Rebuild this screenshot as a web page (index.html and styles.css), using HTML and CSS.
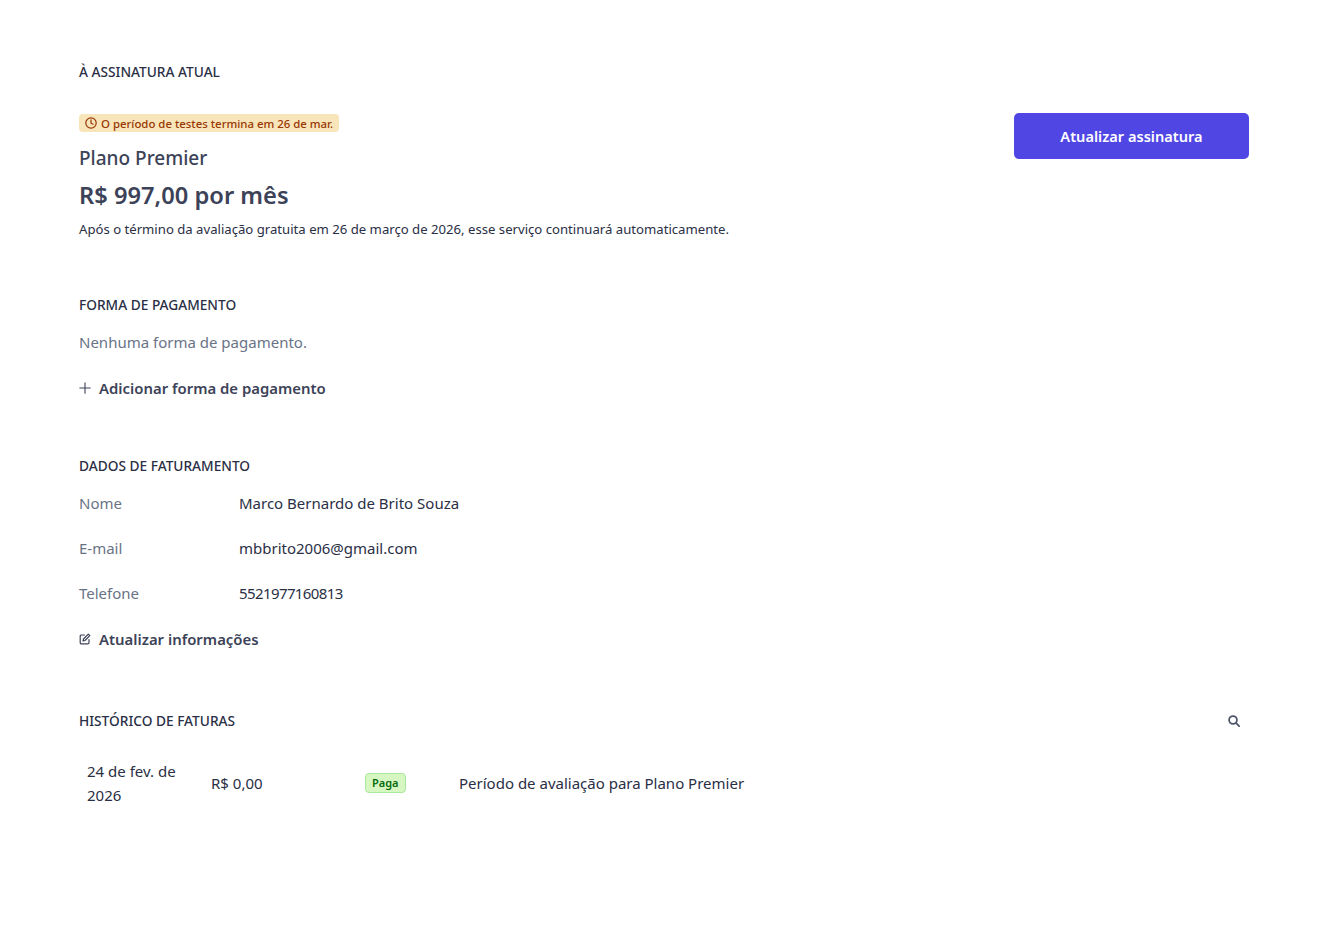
FILE: index.html
```html
<!DOCTYPE html>
<html lang="pt-BR">
<head>
  <meta charset="UTF-8">
  <title>Assinatura</title>
  <link rel="stylesheet" href="styles.css">
</head>
<body>
  <main class="page">
    <!-- Assinatura atual -->
    <section class="section current">
      <h2 class="section-title">À ASSINATURA ATUAL</h2>
      <div class="plan-row">
        <div class="plan-info">
          <span class="trial-badge">
            <svg class="badge-icon" viewBox="0 0 12 12" fill="none" stroke="currentColor" stroke-width="1.2" stroke-linecap="round">
              <circle cx="6" cy="6" r="5.2"/>
              <path d="M6 2.8v3.4l2.1 1"/>
            </svg>
            O período de testes termina em 26 de mar.
          </span>
          <div class="plan-name">Plano Premier</div>
          <div class="plan-price">R$ 997,00 por mês</div>
          <p class="plan-note">Após o término da avaliação gratuita em 26 de março de 2026, esse serviço continuará automaticamente.</p>
        </div>
        <button class="primary-btn">Atualizar assinatura</button>
      </div>
    </section>

    <!-- Forma de pagamento -->
    <section class="section payment">
      <h2 class="section-title">FORMA DE PAGAMENTO</h2>
      <p class="empty-text">Nenhuma forma de pagamento.</p>
      <a class="action-link" href="#">
        <svg class="action-icon" viewBox="0 0 12 12" fill="none" stroke="currentColor" stroke-width="1.1" stroke-linecap="round">
          <path d="M6 .8v10.4M.8 6h10.4"/>
        </svg>
        Adicionar forma de pagamento
      </a>
    </section>

    <!-- Dados de faturamento -->
    <section class="section billing">
      <h2 class="section-title">DADOS DE FATURAMENTO</h2>
      <dl class="details">
        <div class="detail-row"><dt>Nome</dt><dd>Marco Bernardo de Brito Souza</dd></div>
        <div class="detail-row"><dt>E-mail</dt><dd>mbbrito2006@gmail.com</dd></div>
        <div class="detail-row"><dt>Telefone</dt><dd class="digits">5521977160813</dd></div>
      </dl>
      <a class="action-link" href="#">
        <svg class="action-icon" viewBox="0 0 12 12" fill="none" stroke="currentColor" stroke-width="1.2" stroke-linecap="round" stroke-linejoin="round">
          <path d="M5.5 2H2.5A1.2 1.2 0 0 0 1.2 3.2v6.3a1.2 1.2 0 0 0 1.3 1.3h6.3A1.2 1.2 0 0 0 10 9.5V6.5"/>
          <path d="M9.3 1.2l1.5 1.5L6 7.5l-2 .5.5-2z"/>
        </svg>
        Atualizar informações
      </a>
    </section>

    <!-- Histórico de faturas -->
    <section class="section invoices">
      <div class="invoices-head">
        <h2 class="section-title">HISTÓRICO DE FATURAS</h2>
        <svg class="search-icon" viewBox="0 0 12 12" fill="none" stroke="currentColor" stroke-width="1.8" stroke-linecap="round">
          <circle cx="5" cy="5" r="3.9"/>
          <path d="M8.2 8.2l2.9 2.9"/>
        </svg>
      </div>
      <div class="invoice-row">
        <div class="invoice-date">24 de fev. de 2026</div>
        <div class="invoice-amount">R$ 0,00</div>
        <div class="invoice-status"><span class="paid-badge">Paga</span></div>
        <div class="invoice-desc">Período de avaliação para Plano Premier</div>
      </div>
    </section>
  </main>
</body>
</html>
```

FILE: styles.css
```css
* {
  margin: 0;
  padding: 0;
  box-sizing: border-box;
}

body {
  font-family: "Noto Sans", Arial, sans-serif;
  background-color: #fff;
  color: #2a2f45;
}

.page {
  padding: 62px 69px 0 79px;
}

.section-title {
  font-size: 13.7px;
  line-height: 20px;
  font-weight: 500;
  color: #2a2f45;
}

.current {
  margin-bottom: 56px;
}

.plan-row {
  display: flex;
  justify-content: space-between;
  align-items: flex-start;
  margin-top: 31px;
}

.plan-info {
  margin-top: -1px;
}

.trial-badge {
  display: inline-flex;
  align-items: center;
  gap: 4px;
  height: 18px;
  padding: 0 6px;
  border-radius: 4px;
  background-color: #f8e5b9;
  color: #983705;
  font-size: 11.4px;
  font-weight: 500;
}

.badge-icon {
  width: 12px;
  height: 12px;
}

.plan-name {
  margin-top: 10px;
  font-size: 19px;
  line-height: 28px;
  font-weight: 500;
  color: #3c4257;
}

.plan-price {
  margin-top: 7px;
  font-size: 23.7px;
  line-height: 32px;
  font-weight: 600;
  color: #3c4257;
}

.plan-note {
  margin-top: 8px;
  font-size: 13.15px;
  line-height: 20px;
}

.primary-btn {
  width: 235px;
  height: 46px;
  border: none;
  border-radius: 5px;
  background-color: #5046e4;
  color: #fff;
  font-family: inherit;
  font-size: 14.6px;
  font-weight: 600;
}

.payment {
  margin-bottom: 56px;
}

.empty-text {
  margin-top: 15px;
  font-size: 15px;
  line-height: 24px;
  color: #697386;
}

.action-link {
  display: flex;
  align-items: center;
  gap: 8px;
  margin-top: 22px;
  font-size: 14.9px;
  line-height: 24px;
  font-weight: 600;
  color: #3c4257;
  text-decoration: none;
}

.action-icon {
  width: 12px;
  height: 12px;
}

.billing {
  margin-bottom: 60px;
}

.details {
  margin-top: 15px;
}

.detail-row {
  display: flex;
  font-size: 15px;
  line-height: 24px;
  margin-bottom: 21px;
}

.detail-row dt {
  width: 160px;
  color: #697386;
}

.digits {
  letter-spacing: -0.6px;
}

.invoices-head {
  display: flex;
  justify-content: space-between;
  align-items: center;
  padding-right: 9px;
}

.search-icon {
  width: 12px;
  height: 12px;
  color: #4f566b;
}

.invoice-row {
  display: flex;
  align-items: center;
  margin-top: 28px;
  font-size: 15px;
  line-height: 24px;
}

.invoice-date {
  width: 132px;
  padding-left: 8px;
  padding-right: 8px;
}

.invoice-amount {
  width: 154px;
}

.invoice-status {
  width: 94px;
  display: flex;
}

.paid-badge {
  display: inline-block;
  height: 20px;
  padding: 0 6px;
  border: 1px solid #a9e89f;
  border-radius: 4px;
  background-color: #d7f7c2;
  color: #05690d;
  font-size: 11px;
  line-height: 18px;
  font-weight: 600;
}
```
